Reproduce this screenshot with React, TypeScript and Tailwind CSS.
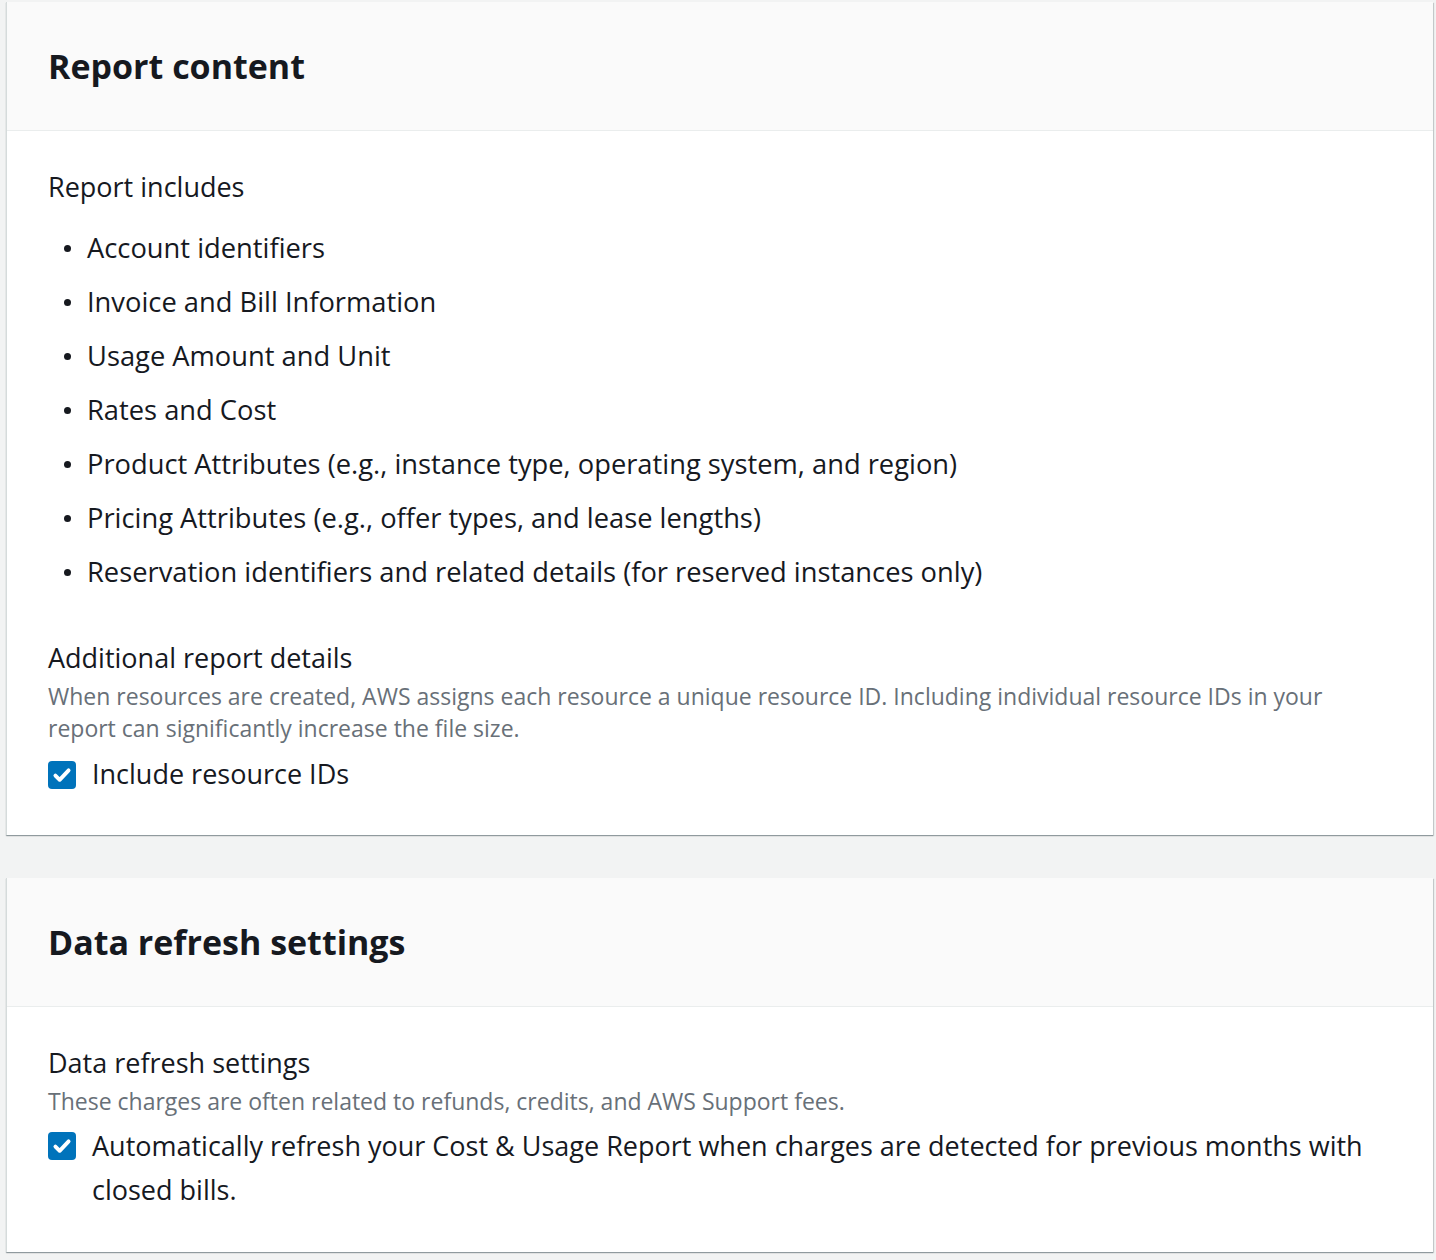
import React from "react"

const items = [
  "Account identifiers",
  "Invoice and Bill Information",
  "Usage Amount and Unit",
  "Rates and Cost",
  "Product Attributes (e.g., instance type, operating system, and region)",
  "Pricing Attributes (e.g., offer types, and lease lengths)",
  "Reservation identifiers and related details (for reserved instances only)",
]

function Check() {
  return (
    <span className="mt-[1px] flex h-[28px] w-[28px] shrink-0 items-center justify-center rounded-[4px] bg-[#0073bb]">
      <svg viewBox="0 0 16 16" className="h-[22px] w-[22px]" fill="none">
        <path d="M3.2 8.4l3.1 3.1L12.8 4.6" stroke="white" strokeWidth="2.8" strokeLinecap="round" strokeLinejoin="round" />
      </svg>
    </span>
  )
}

function Card({ title, children }: { title: string; children: React.ReactNode }) {
  return (
    <div className="bg-white border-l border-[#d5dbdb] shadow-[0_1px_1px_0_rgba(0,28,36,0.3),1px_1px_1px_0_rgba(0,28,36,0.15)]">
      <div className="flex h-[129px] items-center border-b border-[#eaeded] bg-[#fafafa] px-[41px]">
        <h2 className="text-[34px] font-bold leading-none text-[#16191f]">{title}</h2>
      </div>
      {children}
    </div>
  )
}

export default function App() {
  return (
    <div className="min-h-[1260px] bg-[#f2f3f3] pl-[6px] pr-[3px] pt-[2px]" style={{ fontFamily: '"Open Sans", "Noto Sans", sans-serif' }}>
      <Card title="Report content">
        <div className="px-[41px] pb-[43px] pt-[38px] text-[#16191f]">
          <div className="text-[27px] leading-[36px]">Report includes</div>
          <ul className="mt-[16px] flex flex-col">
            {items.map((t) => (
              <li key={t} className="flex h-[54px] items-center text-[27.3px]">
                <span className="ml-[16px] mr-[16px] h-[7px] w-[7px] shrink-0 rounded-full bg-[#16191f]" />
                {t}
              </li>
            ))}
          </ul>
          <div className="mt-[41px] text-[27px] leading-[36px]">Additional report details</div>
          <p className="mt-[4px] text-[23px] leading-[32px] text-[#687078]">
            When resources are created, AWS assigns each resource a unique resource ID. Including individual resource IDs in your
            <br />
            report can significantly increase the file size.
          </p>
          <label className="mt-[12px] flex items-center gap-[16px] text-[27px] leading-[36px]">
            <Check />
            Include resource IDs
          </label>
        </div>
      </Card>
      <div className="h-[43px]" />
      <Card title="Data refresh settings">
        <div className="px-[41px] pb-[40px] pt-[38px] text-[#16191f]">
          <div className="text-[27px] leading-[36px]">Data refresh settings</div>
          <p className="mt-[4px] text-[23px] leading-[32px] text-[#687078]">
            These charges are often related to refunds, credits, and AWS Support fees.
          </p>
          <label className="mt-[7px] flex items-start gap-[16px] text-[27px] leading-[44px]">
            <span className="pt-[7px]">
              <Check />
            </span>
            <span>
              Automatically refresh your Cost &amp; Usage Report when charges are detected for previous months with
              <br />
              closed bills.
            </span>
          </label>
        </div>
      </Card>
    </div>
  )
}
